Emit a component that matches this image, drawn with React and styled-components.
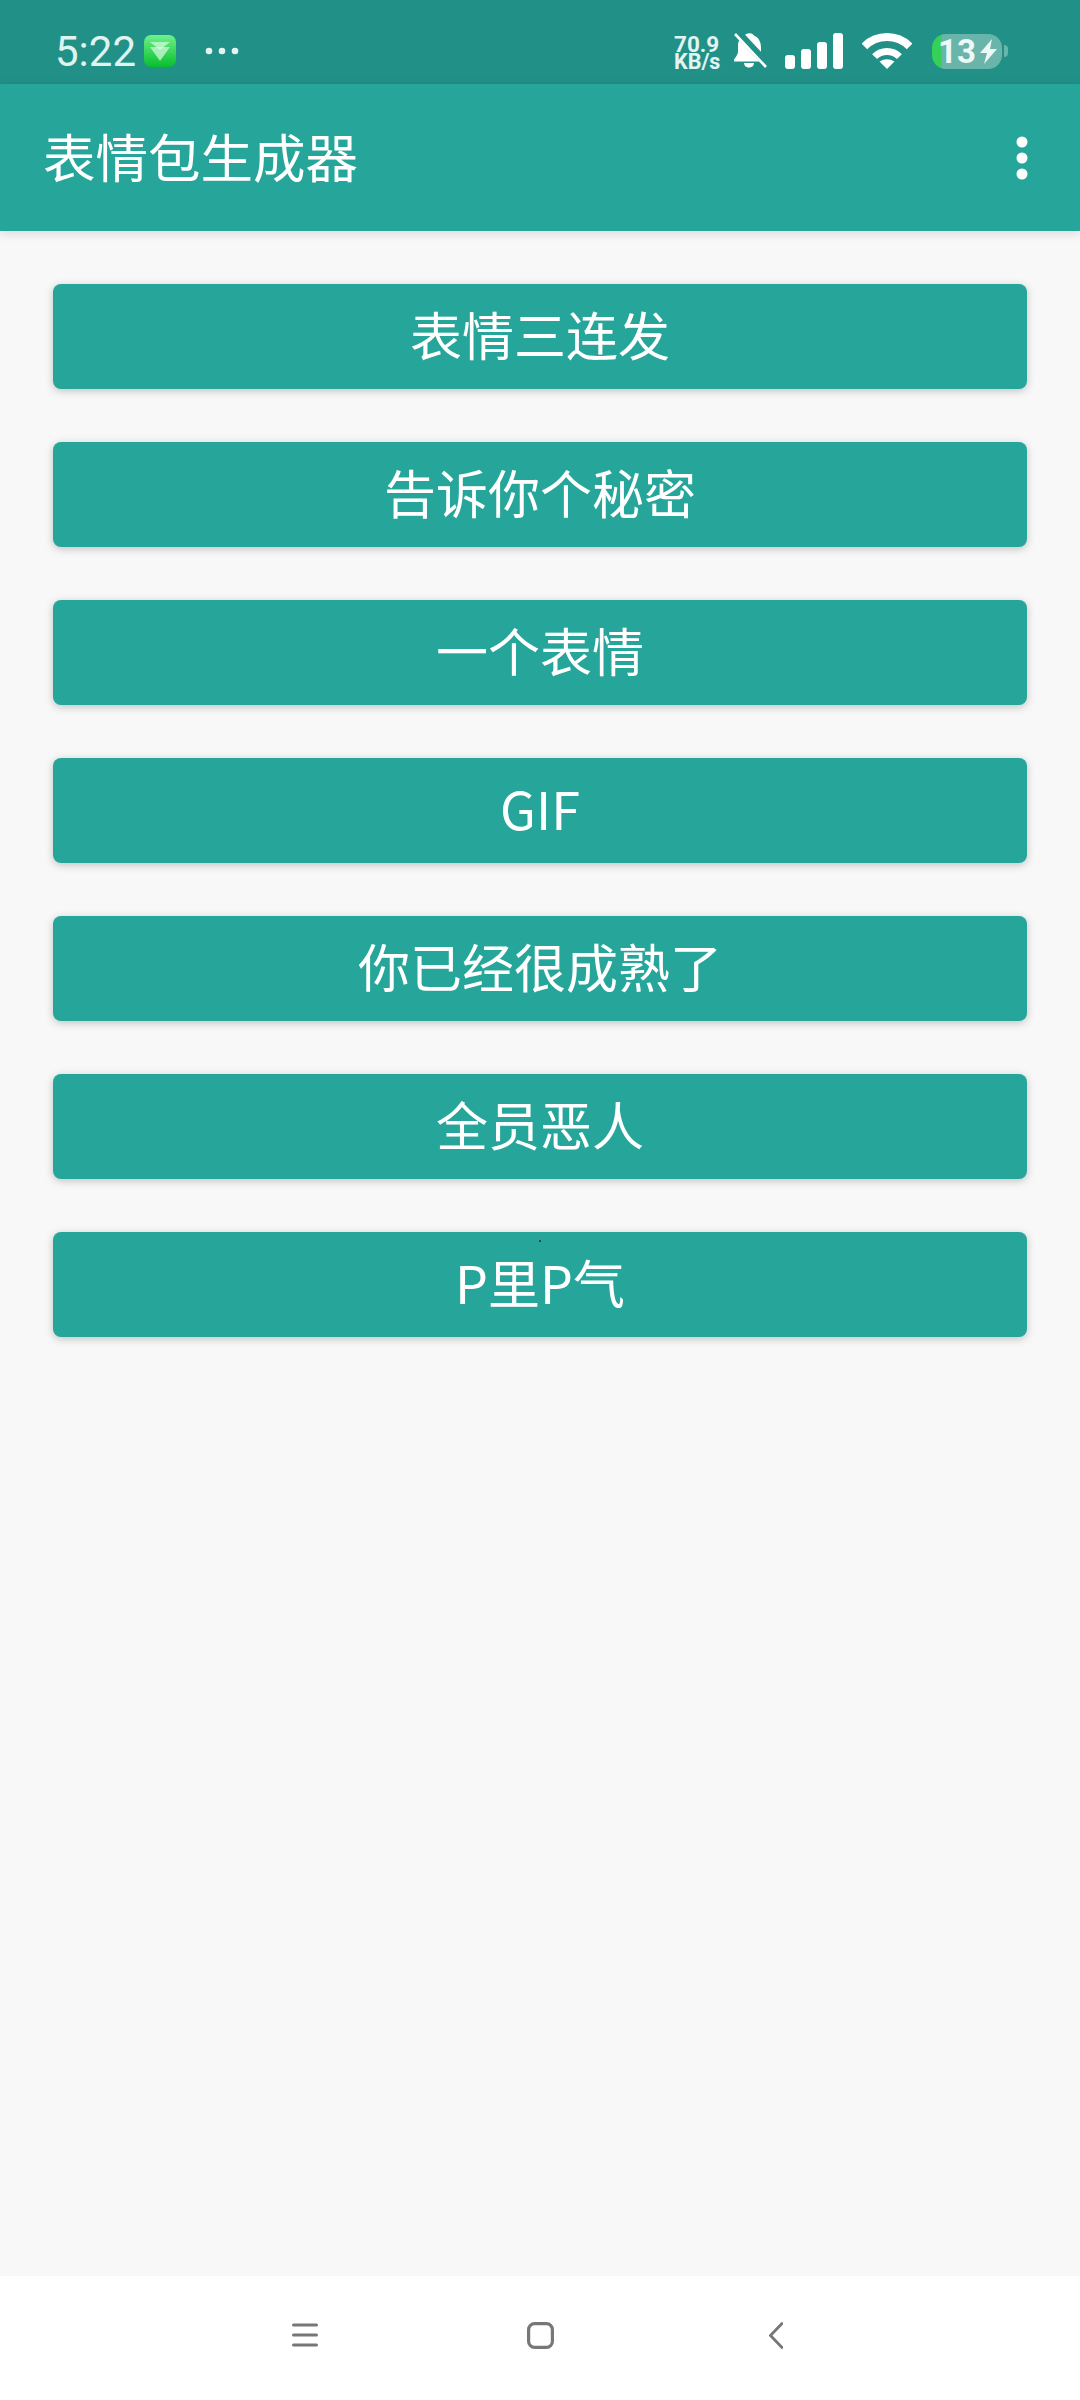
import React from "react";
import styled, { createGlobalStyle } from "styled-components";

const Global = createGlobalStyle`
  html, body { margin: 0; padding: 0; background: #f8f8f8; }
  body { font-family: "Noto Sans CJK SC", "Noto Sans", sans-serif; }
`;
const Page = styled.div`
  width: 1080px; height: 2400px; display: flex; flex-direction: column; background: #f8f8f8; overflow: hidden;
`;
const Status = styled.div`
  height: 84px; flex: none; box-sizing: border-box; background: #219187; color: #fff;
  display: flex; align-items: center; justify-content: space-between;
  padding: 18px 72px 0 55px;
`;
const StatusLeft = styled.div`
  display: flex; align-items: center;
`;
const Clock = styled.span`
  font: 400 42px/36px Roboto, sans-serif; color: #dff3f0; width: 79px; white-space: nowrap; padding-top: 2px;
`;
const AppBadge = styled.svg`
  width: 32px; height: 32px; margin-left: 10px;
`;
const MoreStatus = styled.svg`
  width: 36px; height: 8px; margin-left: 28px;
`;
const StatusRight = styled.div`
  display: flex; align-items: center;
`;
const Speed = styled.div`
  width: 50px; margin-right: 10px; color: #e3f4f2; font-family: Roboto, sans-serif; font-weight: 700;
  display: flex; flex-direction: column; white-space: nowrap; padding-top: 4px;
`;
const SpeedLine = styled.div`
  font-size: ${p => p.$size}px; line-height: 18px; height: 18px;
`;
const Icon = styled.svg`
  display: block; flex: none; margin-right: ${p => p.$mr || 0}px;
`;
const Battery = styled.div`
  width: 70px; height: 35px; border-radius: 14px; position: relative;
  background: linear-gradient(90deg, #34d058 0, #34d058 9px, #69b4ab 10px);
  color: #eef8f6; display: flex; align-items: center; gap: 3px; padding-left: 6px; box-sizing: border-box;
  font: 700 33px/35px Roboto, sans-serif;
`;
const BatteryNub = styled.div`
  width: 4px; height: 12px; margin-left: 2px; border-radius: 0 6px 6px 0; background: #69b4ab;
`;
const Bar = styled.header`
  height: 147px; flex: none; box-sizing: border-box; background: #26a69a; color: #fff;
  display: flex; align-items: center; justify-content: space-between; padding: 0 52px 0 43px;
  box-shadow: 0 2px 10px rgba(0,0,0,.14); position: relative;
`;
const Title = styled.h1`
  margin: 0 0 6px; font: 400 52.5px/70px "Noto Sans CJK SC", sans-serif;
`;
const Overflow = styled.svg`
  width: 12px; height: 44px; display: block;
`;
const List = styled.main`
  flex: 1; display: flex; flex-direction: column; gap: 53px; padding: 53px 53px 0;
`;
const Btn = styled.button`
  height: 105px; border: 0; border-radius: 8px; background: #26a69a; color: #fff; padding: 0 0 6px;
  font: 400 52px/70px "Noto Sans CJK SC", sans-serif; box-shadow: 0 2px 8px rgba(0,0,0,.22);
  position: relative;
  ${p => p.$speck && `
    &::before {
      content: ""; position: absolute; top: 8px; left: 486px; width: 2px; height: 2px; background: #17524c;
    }
  `}
`;
const Nav = styled.nav`
  height: 124px; flex: none; box-sizing: border-box; background: #fff; color: #777;
  display: flex; align-items: center; padding: 0 0 6px 292px;
`;

const labels = ["表情三连发", "告诉你个秘密", "一个表情", "GIF", "你已经很成熟了", "全员恶人", "P里P气"];

export default function App() {
  return (
    <Page>
      <Global />
      <Status>
        <StatusLeft>
          <Clock>5:22</Clock>
          <AppBadge viewBox="0 0 32 32">
            <defs>
              <linearGradient id="gr" x1="0" y1="0" x2="0" y2="1">
                <stop offset="0" stopColor="#6cf28a" />
                <stop offset="1" stopColor="#08bd2e" />
              </linearGradient>
            </defs>
            <rect width="32" height="32" rx="7" fill="url(#gr)" />
            <path d="M6 7h20l-10 8z" fill="#bdf5c9" opacity=".9" />
            <path d="M6 12h20l-10 14z" fill="#d8fbe0" opacity=".7" />
          </AppBadge>
          <MoreStatus viewBox="0 0 36 8">
            <circle cx="5" cy="4" r="3.3" fill="#e3f4f2" />
            <circle cx="18" cy="4" r="3.3" fill="#e3f4f2" />
            <circle cx="31" cy="4" r="3.3" fill="#e3f4f2" />
          </MoreStatus>
        </StatusLeft>
        <StatusRight>
          <Speed>
            <SpeedLine $size={22.5}>70.9</SpeedLine>
            <SpeedLine $size={21.5}>KB/s</SpeedLine>
          </Speed>
          <Icon width="33" height="36" viewBox="0 0 33 36" $mr={18}>
            <path d="M14 0.5c3-1 5 .5 6 2 5 2 7 7 7 12v5c0 3 2 5 3 7v2H0v-2c2-3 4-5 4-8v-6c0-5 3-9 7-10 0-1 1-2 3-2z" fill="#fff" />
            <path d="M10 30h10c0 6-10 6-10 0z" fill="#fff" />
            <path d="M3 -1l31 33" stroke="#219187" strokeWidth="8" />
            <path d="M1 1l31 33" stroke="#fff" strokeWidth="2.6" />
          </Icon>
          <Icon width="58" height="36" viewBox="0 0 58 36" $mr={19}>
            <rect x="0" y="22" width="10" height="14" rx="3" fill="#fff" />
            <rect x="16" y="16" width="10" height="20" rx="3" fill="#fff" />
            <rect x="32" y="9" width="10" height="27" rx="3" fill="#fff" />
            <rect x="48" y="0" width="10" height="36" rx="3" fill="#fff" />
          </Icon>
          <Icon width="50" height="36" viewBox="0 0 50 36" $mr={20}>
            <path d="M2.4 13.4A32 32 0 0 1 47.6 13.4" fill="none" stroke="#fff" strokeWidth="8" />
            <path d="M12.6 23.6A17.5 17.5 0 0 1 37.4 23.6" fill="none" stroke="#fff" strokeWidth="7" />
            <path d="M25 36L17.5 28.5Q25 24 32.5 28.5z" fill="#fff" />
          </Icon>
          <Battery>
            <span>13</span>
            <Icon width="19" height="25" viewBox="0 0 19 25">
              <path d="M13 0L1 14h7L5 25 18 10h-7z" fill="#eef8f6" />
            </Icon>
          </Battery>
          <BatteryNub />
        </StatusRight>
      </Status>
      <Bar>
        <Title>表情包生成器</Title>
        <Overflow viewBox="0 0 12 44">
          <circle cx="6" cy="6" r="5.5" fill="#fff" />
          <circle cx="6" cy="22" r="5.5" fill="#fff" />
          <circle cx="6" cy="38" r="5.5" fill="#fff" />
        </Overflow>
      </Bar>
      <List>
        {labels.map((l, i) => <Btn key={l} $speck={i === labels.length - 1}>{l}</Btn>)}
      </List>
      <Nav>
        <Icon width="26" height="24" viewBox="0 0 26 24" $mr={209} fill="none" stroke="currentColor" strokeWidth="3" strokeLinecap="round">
          <path d="M1.5 2h23M1.5 12h23M1.5 22h23" />
        </Icon>
        <Icon width="27" height="27" viewBox="0 0 27 27" $mr={215} fill="none" stroke="currentColor" strokeWidth="3.2">
          <rect x="1.6" y="1.6" width="23.8" height="23.8" rx="6" />
        </Icon>
        <Icon width="14" height="27" viewBox="0 0 14 27" fill="none" stroke="currentColor" strokeWidth="2.8" strokeLinecap="round">
          <path d="M13 1.5L1.5 13.5 13 25.5" />
        </Icon>
      </Nav>
    </Page>
  );
}
